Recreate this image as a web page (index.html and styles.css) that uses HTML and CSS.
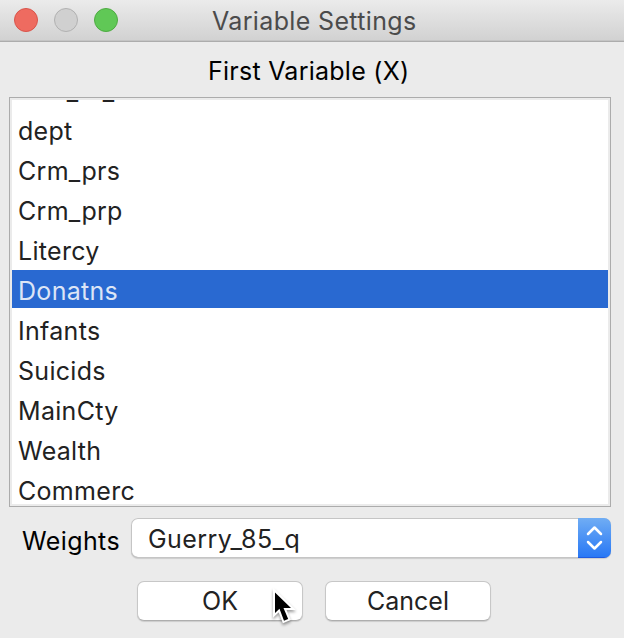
FILE: index.html
```html
<!DOCTYPE html>
<html lang="en">
<head>
<meta charset="utf-8">
<title>Variable Settings</title>
<link rel="stylesheet" href="styles.css">
</head>
<body>
<main class="window">
  <header class="titlebar">
    <div class="controls"><i class="dot close"></i><i class="dot minimize"></i><i class="dot zoom"></i></div>
    <h1 class="title">Variable Settings</h1>
  </header>
  <h2 class="heading">First Variable (X)</h2>
  <div class="list-frame">
    <ul class="list">
      <li>AVE_ID_</li>
      <li>dept</li>
      <li>Crm_prs</li>
      <li>Crm_prp</li>
      <li>Litercy</li>
      <li class="selected">Donatns</li>
      <li>Infants</li>
      <li>Suicids</li>
      <li>MainCty</li>
      <li>Wealth</li>
      <li>Commerc</li>
    </ul>
  </div>
  <div class="weights">
    <span class="label">Weights</span>
    <div class="select">
      <span class="value">Guerry_85_q</span>
      <span class="stepper"><svg width="33" height="40" viewBox="0 0 33 40"><path d="M10 16l6.500-6.500 6.500 6.500M10 24l6.500 6.500 6.500-6.500" fill="none" stroke="#fff" stroke-width="2.500" stroke-linecap="round" stroke-linejoin="round"/></svg></span>
    </div>
  </div>
  <div class="buttons">
    <button class="button">OK</button>
    <button class="button">Cancel</button>
  </div>
  <svg class="cursor" width="32" height="44" viewBox="0 0 32 44"><path d="M5 4.500v20.500l4.500-4.300 4.500 12 4.200-1.800-4.700-10.900h7.500z" fill="#000" stroke="#fff" stroke-width="4" paint-order="stroke"/></svg>
</main>
</body>
</html>
```

FILE: styles.css
```css
* { box-sizing: border-box; }
body {
  margin: 0;
  background: #ebebeb;
  font: 25px/38px Inter, "Liberation Sans", sans-serif;
  color: #222;
}
.window { position: relative; width: 624px; height: 638px; overflow: hidden; }
.titlebar {
  display: grid;
  grid-template-columns: 212px 1fr;
  height: 42px;
  background: linear-gradient(#ebebeb, #d1d1d1);
  border-bottom: 1px solid #acacac;
  box-shadow: inset 0 -1px #c4c4c4;
}
.controls { display: flex; gap: 16px; padding: 8px 0 0 14px; }
.dot { width: 24px; height: 24px; border-radius: 50%; border: 1px solid; }
.close { background: #ee6b60; border-color: #d9544b; }
.minimize { background: #d0d0d0; border-color: #b1b1b1; }
.zoom { background: #60c856; border-color: #4eab42; }
.title, .heading { margin: 0; font-size: 25px; font-weight: 400; white-space: nowrap; }
.title { line-height: 42px; color: #4b4b4b; letter-spacing: 0.35px; }
.heading { height: 55px; padding-left: 208px; line-height: 59px; color: #000; letter-spacing: 0.25px; }
.list-frame {
  width: 602px;
  height: 410px;
  margin-left: 9px;
  padding: 2px;
  border: 1px solid #acacac;
  background: #ebebeb;
}
.list {
  height: 404px;
  margin: 0;
  padding: 0;
  overflow: hidden;
  list-style: none;
  background: #fff;
}
.list li { height: 38px; margin-bottom: 2px; padding-left: 6px; line-height: 42px; letter-spacing: 0.3px; }
.list li:first-child { margin-top: -30px; padding-left: 7px; letter-spacing: 0; }
.list .selected { background: #2969d1; color: #dce5f6; }
.weights { display: flex; margin: 11px 0 0 22px; height: 40px; }
.label { width: 109px; line-height: 46px; color: #000; letter-spacing: 0.4px; }
.select {
  display: flex;
  justify-content: space-between;
  width: 480px;
  height: 40px;
  overflow: hidden;
  border-radius: 7px;
  background: #fff;
  box-shadow: inset 0 0 0 1px #c5c5c5, inset 0 -1px #b0b0b0, 0 1px 1px #0002;
}
.value { padding-left: 17px; line-height: 42px; letter-spacing: 0.45px; }
.stepper { width: 33px; height: 40px; background: linear-gradient(#70adf4, #2878f5); border-bottom: 1px solid #1f5be0; }
.stepper svg { display: block; }
.buttons { display: flex; gap: 22px; margin: 23px 0 0 137px; }
.button {
  width: 166px;
  height: 40px;
  padding: 0;
  border: 1px solid #c7c7c7;
  border-bottom-color: #aeaeae;
  border-radius: 7px;
  background: #fff;
  box-shadow: 0 1px 1px #0002;
  color: #222;
  font: inherit;
}
.cursor { position: absolute; left: 270px; top: 588px; filter: drop-shadow(0 2px 1.5px #0006); }
```
